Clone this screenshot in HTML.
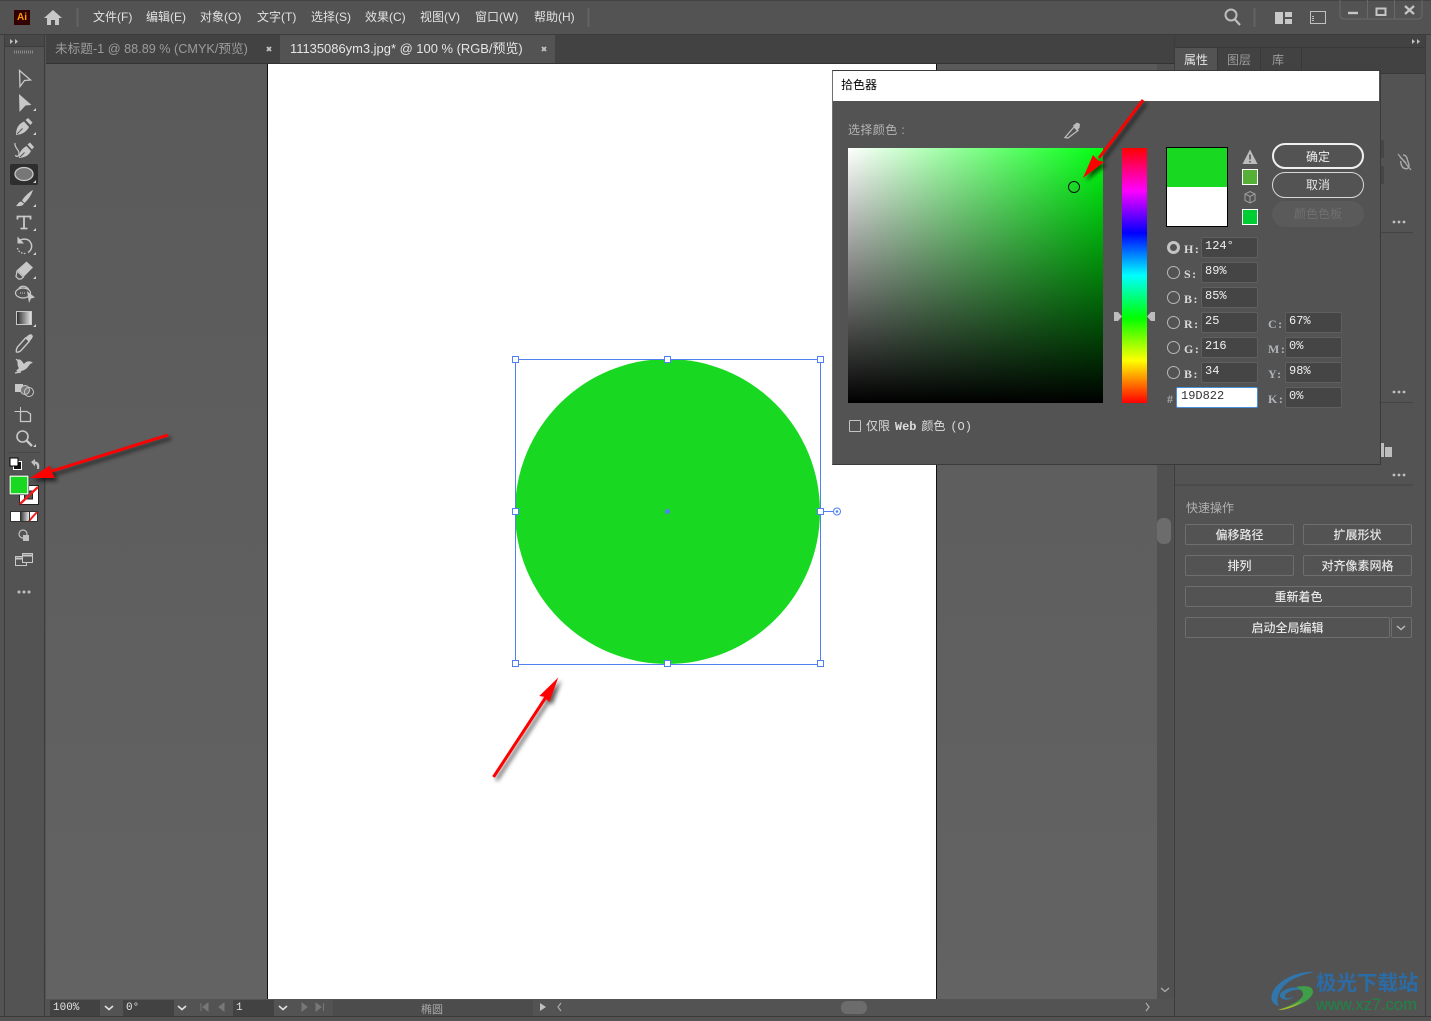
<!DOCTYPE html>
<html><head><meta charset="utf-8"><style>
html,body{margin:0;padding:0;background:#535353;}
body{width:1431px;height:1021px;position:relative;overflow:hidden;font-family:"Liberation Sans","Noto Sans CJK SC",sans-serif;font-size:12px;}
div,span{box-sizing:border-box;}
.a{position:absolute;}
.t{position:absolute;white-space:nowrap;line-height:14px;}
.m{color:#e2e2e2;top:10px;font-size:12px;}
.f{position:absolute;background:#454545;border:1px solid #5f5f5f;border-radius:2px;width:57px;height:21px;color:#f0f0f0;font:12px/16px "Liberation Mono","Noto Serif CJK SC",monospace;padding-left:3px;}
.l{position:absolute;color:#d8d8d8;font:bold 12px/14px "Liberation Serif","Noto Serif CJK SC",serif;letter-spacing:1.500px;}
.r{position:absolute;left:1167px;width:13px;height:13px;border:1.500px solid #b8b8b8;border-radius:50%;}
.b{position:absolute;height:21px;border:1px solid #6e6e6e;border-radius:2px;color:#e6e6e6;text-align:center;line-height:20px;font-size:12px;font-weight:500;}
.s{position:absolute;top:1000px;height:16px;background:#424242;color:#e4e4e4;font:11px/17px "Liberation Mono",monospace;padding-left:3px;}
</style></head><body>

<!-- window chrome -->
<div class="a" style="left:0;top:0;width:1431px;height:35px;background:#535353;border-top:1px solid #444"></div>
<div class="a" style="left:0;top:34px;width:1431px;height:1px;background:#3c3c3c"></div>
<div class="a" style="left:14px;top:10px;width:16px;height:15px;background:#330000;color:#ff9a00;font:bold 10px/15px 'Liberation Sans',sans-serif;text-align:center">Ai</div>
<span class="t m" style="left:93px">文件(F)</span>
<span class="t m" style="left:146px">编辑(E)</span>
<span class="t m" style="left:200px">对象(O)</span>
<span class="t m" style="left:257px">文字(T)</span>
<span class="t m" style="left:311px">选择(S)</span>
<span class="t m" style="left:365px">效果(C)</span>
<span class="t m" style="left:420px">视图(V)</span>
<span class="t m" style="left:475px">窗口(W)</span>
<span class="t m" style="left:534px">帮助(H)</span>

<!-- left toolbar -->
<div class="a" style="left:4px;top:35px;width:41px;height:981px;background:#535353;border-left:1px solid #3c3c3c;border-right:1px solid #3c3c3c"></div>
<div class="a" style="left:5px;top:35px;width:39px;height:12px;background:#484848;border-bottom:1px solid #3c3c3c"></div>

<!-- tabs -->
<div class="a" style="left:46px;top:35px;width:1128px;height:29px;background:#424242;border-bottom:1px solid #333"></div>
<div class="a" style="left:280px;top:35px;width:275px;height:29px;background:#535353;border-bottom:1px solid #333"></div>
<span class="t" style="left:55px;top:42px;color:#9c9c9c;font-size:12.660px">未标题-1 @ 88.89 % (CMYK/预览)</span>
<span class="t" style="left:290px;top:42px;color:#e6e6e6;font-size:12.940px">11135086ym3.jpg* @ 100 % (RGB/预览)</span>

<!-- canvas -->
<div class="a" style="left:46px;top:64px;width:1111px;height:935px;background:linear-gradient(#5a5a5a,#636363)"></div>
<div class="a" style="left:267px;top:64px;width:670px;height:935px;background:#fff;border-left:1px solid #111;border-right:1px solid #111"></div>
<div class="a" style="left:515px;top:359px;width:305px;height:305px;border-radius:50%;background:#19d822"></div>

<!-- scrollbars -->
<div class="a" style="left:1157px;top:64px;width:16px;height:935px;background:#505050"></div>
<div class="a" style="left:1157px;top:518px;width:14px;height:26px;border-radius:6px;background:#6c6c6c"></div>
<div class="a" style="left:552px;top:999px;width:605px;height:17px;background:#535353"></div>
<div class="a" style="left:841px;top:1001px;width:26px;height:13px;border-radius:6px;background:#6c6c6c"></div>

<!-- status bar -->
<div class="a" style="left:46px;top:999px;width:506px;height:17px;background:#535353"></div>
<div class="s" style="left:50px;width:50px">100%</div>
<div class="s" style="left:123px;width:51px">0°</div>
<div class="s" style="left:233px;width:41px">1</div>
<div class="a" style="left:333px;top:1000px;width:200px;height:16px;background:#4c4c4c"></div>
<span class="t" style="left:421px;top:1003px;color:#a8a8a8;font-size:11px">椭圆</span>
<div class="a" style="left:0;top:1016px;width:1431px;height:1px;background:#3a3a3a"></div>

<!-- right panel -->
<div class="a" style="left:1174px;top:35px;width:252px;height:981px;background:#535353;border-left:1px solid #3c3c3c;border-right:1px solid #3c3c3c"></div>
<div class="a" style="left:1175px;top:35px;width:250px;height:39px;background:#424242;border-bottom:1px solid #383838"></div>
<div class="a" style="left:1175px;top:35px;width:250px;height:13px;border-bottom:1px solid #383838"></div>
<div class="a" style="left:1175px;top:48px;width:43px;height:26px;background:#535353;border-right:1px solid #383838"></div>
<div class="a" style="left:1218px;top:48px;width:43px;height:26px;border-right:1px solid #383838"></div>
<div class="a" style="left:1261px;top:48px;width:41px;height:26px;border-right:1px solid #383838"></div>
<span class="t" style="left:1184px;top:53px;color:#e6e6e6">属性</span>
<span class="t" style="left:1227px;top:53px;color:#9c9c9c">图层</span>
<span class="t" style="left:1272px;top:53px;color:#9c9c9c">库</span>
<div class="a" style="left:1380px;top:232px;width:33px;height:1px;background:#444"></div>
<div class="a" style="left:1380px;top:402px;width:33px;height:1px;background:#444"></div>
<div class="a" style="left:1175px;top:484px;width:238px;height:2px;background:#4a4a4a"></div>
<span class="t" style="left:1186px;top:501px;color:#b0b0b0">快速操作</span>
<div class="b" style="left:1185px;top:524px;width:109px">偏移路径</div>
<div class="b" style="left:1303px;top:524px;width:109px">扩展形状</div>
<div class="b" style="left:1185px;top:555px;width:109px">排列</div>
<div class="b" style="left:1303px;top:555px;width:109px">对齐像素网格</div>
<div class="b" style="left:1185px;top:586px;width:227px">重新着色</div>
<div class="b" style="left:1185px;top:617px;width:205px">启动全局编辑</div>
<div class="b" style="left:1391px;top:617px;width:21px"></div>
<!-- bits peeking beside dialog -->
<div class="a" style="left:1380px;top:140px;width:4px;height:18px;background:#454545;border-radius:0 2px 2px 0"></div>
<div class="a" style="left:1380px;top:166px;width:4px;height:18px;background:#454545;border-radius:0 2px 2px 0"></div>
<div class="a" style="left:1381px;top:443px;width:3px;height:14px;background:#bdbdbd"></div>
<div class="a" style="left:1385px;top:447px;width:7px;height:10px;background:#bdbdbd"></div>

<!-- colour picker -->
<div class="a" style="left:832px;top:70px;width:549px;height:395px;background:#535353;border:1px solid #3a3a3a;border-left-color:#707070"></div>
<div class="a" style="left:833px;top:71px;width:546px;height:30px;background:#fff"></div>
<span class="t" style="left:841px;top:78px;color:#000">拾色器</span>
<span class="t" style="left:848px;top:123px;color:#b4b4b4;letter-spacing:.4px">选择颜色 :</span>

<div class="a" style="left:848px;top:148px;width:255px;height:255px;background:linear-gradient(to bottom,rgba(0,0,0,0),#000),linear-gradient(to right,#fff,#00ff11)"></div>
<div class="a" style="left:1068px;top:181px;width:12px;height:12px;border:1.500px solid #111;border-radius:50%"></div>
<div class="a" style="left:1122px;top:148px;width:25px;height:255px;background:linear-gradient(to bottom,#f00 0%,#f0f 16.67%,#00f 33.33%,#0ff 50%,#0f0 66.67%,#ff0 83.33%,#f00 100%)"></div>

<div class="a" style="left:1166px;top:147px;width:62px;height:80px;background:#fff;border:1px solid #000"></div>
<div class="a" style="left:1167px;top:148px;width:60px;height:39px;background:#19d822"></div>
<div class="a" style="left:1242px;top:169px;width:16px;height:16px;background:#55b135;border:1px solid #fff"></div>
<div class="a" style="left:1242px;top:209px;width:16px;height:16px;background:#00cc33;border:1px solid #fff"></div>

<div class="a" style="left:1272px;top:143px;width:92px;height:26px;border:2px solid #f0f0f0;border-radius:13px;color:#eee;text-align:center;line-height:25px">确定</div>
<div class="a" style="left:1272px;top:172px;width:92px;height:26px;border:1px solid #d8d8d8;border-radius:13px;color:#e4e4e4;text-align:center;line-height:25px">取消</div>
<div class="a" style="left:1272px;top:201px;width:92px;height:26px;background:#5a5a5a;border-radius:13px;color:#707070;text-align:center;line-height:27px">颜色色板</div>

<div class="r" style="top:241px;background:#535353;border:3.500px solid #c4c4c4"></div>
<div class="r" style="top:266px"></div>
<div class="r" style="top:291px"></div>
<div class="r" style="top:316px"></div>
<div class="r" style="top:341px"></div>
<div class="r" style="top:366px"></div>

<span class="l" style="left:1184px;top:242px">H:</span>
<span class="l" style="left:1184px;top:267px">S:</span>
<span class="l" style="left:1184px;top:292px">B:</span>
<span class="l" style="left:1184px;top:317px">R:</span>
<span class="l" style="left:1184px;top:342px">G:</span>
<span class="l" style="left:1184px;top:367px">B:</span>
<span class="l" style="left:1167px;top:392px;color:#a8a8a8">#</span>
<span class="l" style="left:1268px;top:317px;color:#aeb4ba">C:</span>
<span class="l" style="left:1268px;top:342px;color:#aeb4ba">M:</span>
<span class="l" style="left:1268px;top:367px;color:#aeb4ba">Y:</span>
<span class="l" style="left:1268px;top:392px;color:#aeb4ba">K:</span>

<div class="f" style="left:1201px;top:237px">124°</div>
<div class="f" style="left:1201px;top:262px">89%</div>
<div class="f" style="left:1201px;top:287px">85%</div>
<div class="f" style="left:1201px;top:312px">25</div>
<div class="f" style="left:1201px;top:337px">216</div>
<div class="f" style="left:1201px;top:362px">34</div>
<div class="f" style="left:1176px;top:387px;width:82px;background:#fff;border-color:#4a90d9;color:#333;padding-left:4px">19D822</div>
<div class="f" style="left:1285px;top:312px">67%</div>
<div class="f" style="left:1285px;top:337px">0%</div>
<div class="f" style="left:1285px;top:362px">98%</div>
<div class="f" style="left:1285px;top:387px">0%</div>

<div class="a" style="left:849px;top:420px;width:12px;height:12px;border:1px solid #c4c4c4;border-radius:1px"></div>
<span class="t" style="left:866px;top:420px;color:#dcdcdc;font-family:'Liberation Mono','Noto Sans CJK SC',monospace;word-spacing:-2.300px">仅限 <b>Web</b> 颜色 (O)</span>

<!-- watermark text -->
<span class="t" style="left:1316px;top:972px;color:#2b6ca6;font-size:20.500px;line-height:24px;font-weight:700">极光下载站</span>
<span class="t" style="left:1316px;top:996px;color:#1e8545;font-size:16.500px;line-height:18px">www.xz7.com</span>

<!-- icons & overlays -->
<svg class="a" style="left:0;top:0" width="1431" height="1021" viewBox="0 0 1431 1021" fill="none">
<defs><filter id="sh" x="-30%" y="-30%" width="170%" height="170%"><feDropShadow dx="3" dy="3" stdDeviation="2.200" flood-color="#000" flood-opacity=".65"/></filter>
<linearGradient id="g1"><stop offset="0" stop-color="#2a2a2a"/><stop offset="1" stop-color="#e8e8e8"/></linearGradient></defs>

<!-- title bar -->
<path d="M44 18 L53 10 L62 18 L59 18 L59 25 L55 25 L55 20 L51 20 L51 25 L47 25 L47 18Z" fill="#c8c8c8"/>
<path d="M77.500 8V27M588.500 8V27M1254.500 8V27" stroke="#636363" stroke-width="2"/>
<circle cx="1231" cy="15" r="5.500" stroke="#bdbdbd" stroke-width="2"/>
<path d="M1235 19.500L1240 25" stroke="#bdbdbd" stroke-width="2.200"/>
<path d="M1275 12h8v12h-8zM1285 12h7v5h-7zM1285 19h7v5h-7z" fill="#c8c8c8"/>
<rect x="1310.500" y="11.500" width="15" height="12" stroke="#c0c0c0"/>
<path d="M1313 16v5" stroke="#c0c0c0" stroke-width="2" stroke-dasharray="1 1"/>
<path d="M1340 0V15Q1340 19 1344 19H1418Q1422 19 1422 15V0M1367.500 0V19M1394.500 0V19" stroke="#696969"/>
<path d="M1348 13h10" stroke="#c4c4c4" stroke-width="2.400"/>
<rect x="1376.500" y="8.500" width="9" height="6.500" stroke="#c4c4c4" stroke-width="2"/>
<path d="M1405 6l9 8M1414 6l-9 8" stroke="#c4c4c4" stroke-width="2.200"/>

<!-- tab close, double arrows -->
<path d="M267 47l4 4M271 47l-4 4M542 47l4 4M546 47l-4 4" stroke="#c4c4c4" stroke-width="1.800"/>
<path d="M10 39l3 2.500-3 2.500zM15 39l3 2.500-3 2.500zM1412 39l3 2.500-3 2.500zM1417 39l3 2.500-3 2.500z" fill="#c0c0c0"/>
<path d="M14 52h19" stroke="#8a8a8a" stroke-width="3" stroke-dasharray="1 1"/>

<!-- tools -->
<path d="M19.500 70.500L30.500 80L24.500 80.500L20 86.500Z" stroke="#c8c8c8" stroke-width="1.300"/>
<path d="M19 94L31.500 105L25.500 105.500L19.500 112Z" fill="#c8c8c8"/>
<rect x="10" y="164" width="28" height="21" rx="2" fill="#2e2e2e"/>
<ellipse cx="24" cy="174" rx="9" ry="6.500" fill="#777" stroke="#c8c8c8" stroke-width="1.300"/>
<!-- pen -->
<path d="M16 135C16 128 18.500 124 24 121.500L29 127C27 131 23 134.500 16 135Z" fill="#c8c8c8"/>
<path d="M17 134L22.500 128.500" stroke="#535353" stroke-width="1"/>
<path d="M25.500 120L28 118L32.500 122.500L30.500 125Z" fill="#c8c8c8"/>
<!-- curvature -->
<path d="M19 158C19 152 22 148.500 26.500 146L31 151C29 155 25.500 157.500 19 158Z" fill="#c8c8c8"/>
<path d="M20 157L24.500 152.500" stroke="#535353" stroke-width="1"/>
<path d="M27.500 144.500L30 142.500L34 147L32 149.500Z" fill="#c8c8c8"/>
<path d="M15 143C14 148 20 150 19 154C18.500 157 16 157 15.500 155" stroke="#c8c8c8" stroke-width="1.200"/>
<!-- brush -->
<path d="M33 190C29 192 24 197 22 200.500L24.500 203C28 200 31.500 195 33 190Z" fill="#c8c8c8"/>
<path d="M21 201.500C18.500 202 18 204 16 206C19 206.500 23 206 24 203.500Z" fill="#c8c8c8"/>
<!-- type -->
<path d="M17.500 219.500V216.500H30.500V219.500M24 216.500V228.500M20.500 228.500H27.500" stroke="#c8c8c8" stroke-width="1.800"/>
<!-- rotate -->
<path d="M19 241C22 238.500 27 238.500 29.500 241C33 245 32 250 28 252.500" stroke="#c8c8c8" stroke-width="1.500"/>
<path d="M17.500 236.500V243.500H24Z" fill="#c8c8c8"/>
<path d="M17.500 248C18 251 20.500 253.500 25.500 253.500" stroke="#c8c8c8" stroke-width="1.300" stroke-dasharray="1.500 1.500"/>
<!-- eraser -->
<path d="M17 270L26.500 261.500L33 267.500L24 276.500Z" fill="#c8c8c8"/>
<path d="M17 271L23.500 277L21 279H18.500L16 276.500Z" stroke="#c8c8c8" stroke-width="1.200"/>
<!-- shaper -->
<ellipse cx="23" cy="293" rx="7.500" ry="5" stroke="#c8c8c8" stroke-width="1.200"/>
<path d="M20 293h6" stroke="#c8c8c8" stroke-dasharray="1 1"/>
<path d="M19 288C22 285 27 286 29 290" stroke="#c8c8c8" stroke-width="1.200"/>
<path d="M27 291L35 297.500L31 298.500L29 303Z" fill="#c8c8c8"/>
<!-- gradient -->
<rect x="16.500" y="311.500" width="15" height="13" fill="url(#g1)" stroke="#c8c8c8"/>
<!-- eyedropper -->
<path d="M26 337.500L17.500 347C16.500 349 16 351 16.500 352C18 352.500 20 351.500 21 350.500L29.500 341" stroke="#c8c8c8" stroke-width="1.400"/>
<path d="M25 338L28.500 335L31 334L33 336L32 338.500L29 342Z" fill="#c8c8c8"/>
<!-- puppet -->
<path d="M17 360C20 358 22 361 24 364C26 361 30 360 33 363C30 363 29 366 27 368C25 370 22 371 18 372L16 371L19 368C17 366 18 363 17 360Z" fill="#c8c8c8"/>
<path d="M16 359l2 2M15 373l6 -1" stroke="#c8c8c8" stroke-width="1.200"/>
<!-- shape builder -->
<rect x="15" y="384" width="8" height="8" fill="#c8c8c8"/>
<circle cx="25" cy="390" r="4.500" fill="#777" stroke="#c8c8c8"/>
<circle cx="29" cy="392" r="4.500" stroke="#c8c8c8"/>
<!-- artboard -->
<path d="M20.500 407V414M14.500 411.500H20.500" stroke="#c8c8c8"/>
<path d="M20.500 411.500H27L30.500 414V421.500H20.500Z" stroke="#c8c8c8" stroke-width="1.300"/>
<!-- zoom -->
<circle cx="22.500" cy="436.500" r="5.500" stroke="#c8c8c8" stroke-width="1.600"/>
<path d="M26.500 440.500L32 446" stroke="#c8c8c8" stroke-width="2.400"/>
<!-- corner markers -->
<path d="M36 108V111H33ZM36 132V135H33ZM36 204V207H33ZM36 228V231H33ZM36 252V255H33ZM36 276V279H33ZM36 324V327H33ZM36 444V447H33ZM36 180V183H33Z" fill="#d0d0d0"/>
<path d="M9 452.500H40" stroke="#484848"/>
<!-- default colours, swap -->
<rect x="13.500" y="461.500" width="8" height="8" fill="#111" stroke="#fff"/>
<rect x="10" y="458" width="8" height="8" fill="#fff" stroke="#000"/>
<path d="M31 462L35 459V461.500C39 461.500 40 465 39 469H37C37.500 466 36.500 464 35 464V466.500Z" fill="#c0c0c0"/>
<!-- stroke/fill -->
<rect x="19.500" y="485.500" width="19" height="19" fill="#fff" stroke="#222"/>
<rect x="24.500" y="491" width="8" height="8" fill="#555" stroke="#222"/>
<path d="M20 504L38 487" stroke="#f01c1c" stroke-width="2.400"/>
<rect x="10" y="476" width="18" height="18" fill="#19d822" stroke="#fff" stroke-width="1.500"/>
<rect x="9.200" y="475.200" width="19.600" height="19.600" stroke="#222" stroke-width=".6"/>
<!-- modes -->
<rect x="10.500" y="511.500" width="27" height="10" fill="#fff" stroke="#333"/>
<rect x="20" y="512" width="9" height="9" fill="url(#g1)"/>
<path d="M29 521L37 512" stroke="#f01c1c" stroke-width="2"/>
<path d="M29.500 512V521" stroke="#333"/>
<!-- draw mode -->
<circle cx="23" cy="534" r="4" stroke="#c0c0c0" stroke-width="1.200"/>
<rect x="23" y="535" width="6" height="6" fill="#c0c0c0"/>
<!-- screen mode -->
<rect x="15.500" y="556.500" width="11" height="9" stroke="#c8c8c8"/>
<rect x="22.500" y="553.500" width="10" height="9" fill="#535353" stroke="#c8c8c8"/>
<path d="M23 555.500H32M16 558.500H22" stroke="#c8c8c8" stroke-width="2"/>
<!-- more -->
<g fill="#c0c0c0"><circle cx="19" cy="592" r="1.500"/><circle cx="24" cy="592" r="1.500"/><circle cx="29" cy="592" r="1.500"/>
<circle cx="1394" cy="222" r="1.400"/><circle cx="1399" cy="222" r="1.400"/><circle cx="1404" cy="222" r="1.400"/>
<circle cx="1394" cy="392" r="1.400"/><circle cx="1399" cy="392" r="1.400"/><circle cx="1404" cy="392" r="1.400"/>
<circle cx="1394" cy="475" r="1.400"/><circle cx="1399" cy="475" r="1.400"/><circle cx="1404" cy="475" r="1.400"/></g>
<!-- link icon right -->
<path d="M1400 157L1406 163M1403 155C1406 155 1407 157 1407.500 160L1409 165C1409 168 1407 169.500 1405 168.500C1402 168 1401 165 1400.500 161" stroke="#aaa" stroke-width="1.400"/>
<path d="M1398 154L1411 170" stroke="#aaa" stroke-width="1.200"/>

<!-- selection -->
<path d="M515.500 359.500H820.500V664.500H515.500Z" stroke="#4f82f0"/>
<path d="M821 511.500H833" stroke="#4f82f0"/>
<g fill="#fff" stroke="#4f82f0"><rect x="512.500" y="356.500" width="6" height="6"/><rect x="664.500" y="356.500" width="6" height="6"/><rect x="817.500" y="356.500" width="6" height="6"/><rect x="512.500" y="508.500" width="6" height="6"/><rect x="817.500" y="508.500" width="6" height="6"/><rect x="512.500" y="660.500" width="6" height="6"/><rect x="664.500" y="660.500" width="6" height="6"/><rect x="817.500" y="660.500" width="6" height="6"/></g>
<circle cx="667.500" cy="511.500" r="2.500" fill="#4f82f0"/>
<circle cx="837" cy="511.500" r="3.500" stroke="#4f82f0"/><circle cx="837" cy="511.500" r="1.300" fill="#4f82f0"/>

<!-- dialog icons -->
<path d="M1065 137.500L1074 127L1078 130.500L1068 138Z" stroke="#bcbcbc" stroke-width="1.300"/>
<path d="M1073 125.500L1077 122.500L1080 124L1079.500 128L1076.500 130.500Z" fill="#bcbcbc"/>
<path d="M1114 312H1118L1122 316.500L1118 321H1114ZM1155 312H1151L1147 316.500L1151 321H1155Z" fill="#bcbcbc"/>
<path d="M1250 149.500L1257.500 164H1242.500Z" fill="#bcbcbc"/>
<path d="M1250 154.500V159.500M1250 161V162.500" stroke="#535353" stroke-width="1.600"/>
<path d="M1250 191.500L1255 194V200.500L1250 203L1245 200.500V194ZM1245 194L1250 196.500L1255 194M1250 196.500V203" stroke="#a0a0a0"/>

<!-- button chevrons and status icons -->
<path d="M1397 626l4 3.500 4-3.500" stroke="#c0c0c0" stroke-width="1.300"/>
<path d="M105 1006l4 3.500 4-3.500M178 1006l4 3.500 4-3.500M279 1006l4 3.500 4-3.500" stroke="#e0e0e0" stroke-width="1.600"/>
<path d="M201 1003v8M208 1003l-5 4 5 4zM224 1003l-5 4 5 4zM302 1003l5 4-5 4zM316 1003l5 4-5 4zM323.500 1003v8" stroke="#777" fill="#777"/>
<path d="M540 1003l6 4-6 4z" fill="#c0c0c0"/>
<path d="M561 1003l-3 4 3 4" stroke="#aaa" stroke-width="1.200"/>
<path d="M1146 1003l3 4-3 4" stroke="#aaa" stroke-width="1.300"/>
<path d="M1161 988l4 3.500 4-3.500" stroke="#aaa" stroke-width="1.300"/>

<!-- watermark logo -->
<path d="M1314 972C1295 971 1276 982 1272 994C1270 1001 1274 1005 1279 1006C1275 999 1279 988 1290 981C1298 976 1306 974 1314 972Z" fill="#2d7bb8" opacity=".9"/>
<path d="M1280 994C1284 988 1296 985 1303 990C1296 989 1288 991 1285 995C1284 999 1290 999 1294 996C1290 1002 1278 1000 1280 994Z" fill="#2d7bb8" opacity=".85"/>
<path d="M1296 987C1306 985 1313 986 1313 992C1312 1000 1297 1008 1278 1010C1290 1006 1303 1000 1303 994C1303 991 1300 989 1296 987Z" fill="#3f9e48"/>
<path d="M1278 1010C1288 1007 1296 1005 1303 1000C1297 1006 1288 1010 1278 1010Z" fill="#b5b82f"/>

<!-- red arrows -->
<g filter="url(#sh)" fill="#f00" stroke="none">
<path d="M1143 100L1099 158" stroke="#f00" stroke-width="3"/>
<path d="M1083 178L1093 155L1098 160.500L1104 162Z"/>
<path d="M168 435L52 471" stroke="#f00" stroke-width="3"/>
<path d="M30 478L50 465.500L51.500 471.500L55 478Z"/>
<path d="M493.500 777L546 697" stroke="#f00" stroke-width="3"/>
<path d="M558.300 677.500L549.300 702L544 696.700L539.300 696Z"/>
</g>
</svg>
</body></html>
